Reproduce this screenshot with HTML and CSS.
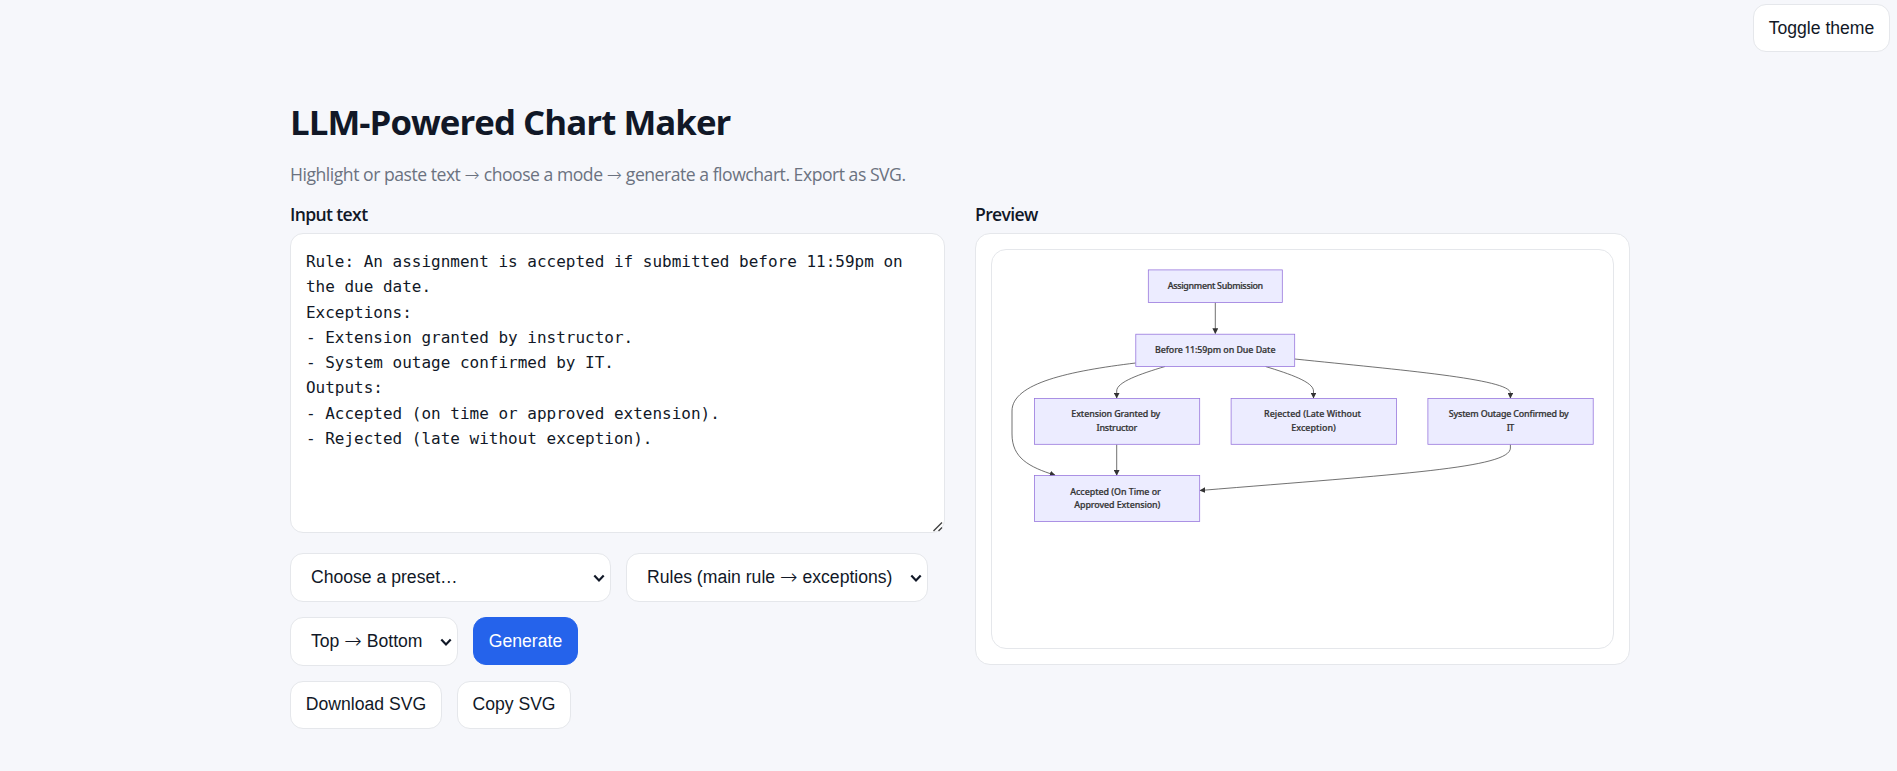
FILE: index.html
```html
<!DOCTYPE html>
<html lang="en">
<head>
<meta charset="utf-8">
<title>LLM-Powered Chart Maker</title>
<link rel="stylesheet" href="styles.css">
</head>
<body>
<div class="topbar"><button class="btn toggle">Toggle theme</button></div>
<main class="page">
  <h1 class="title"><span>LLM-Powered Chart Maker</span></h1>
  <p class="subtitle">Highlight or paste text <span class="arrow">→</span> choose a mode <span class="arrow">→</span> generate a flowchart. Export as SVG.</p>
  <div class="columns">
    <section class="column">
      <label class="label" for="input"><span>Input text</span></label>
      <textarea class="input" id="input" spellcheck="false">Rule: An assignment is accepted if submitted before 11:59pm on the due date.
Exceptions:
- Extension granted by instructor.
- System outage confirmed by IT.
Outputs:
- Accepted (on time or approved extension).
- Rejected (late without exception).</textarea>
      <div class="controls">
        <button class="select preset"><span>Choose a preset…</span><svg class="chevron" viewBox="0 0 12 9" width="12" height="9"><path d="M1.3 1.5L6 6.4L10.7 1.5"/></svg></button>
        <button class="select mode"><span>Rules (main rule <span class="arrow">→</span> exceptions)</span><svg class="chevron" viewBox="0 0 12 9" width="12" height="9"><path d="M1.3 1.5L6 6.4L10.7 1.5"/></svg></button>
        <button class="select direction"><span>Top <span class="arrow">→</span> Bottom</span><svg class="chevron" viewBox="0 0 12 9" width="12" height="9"><path d="M1.3 1.5L6 6.4L10.7 1.5"/></svg></button>
        <button class="btn primary">Generate</button>
      </div>
      <div class="exports">
        <button class="btn download">Download SVG</button>
        <button class="btn copy">Copy SVG</button>
      </div>
    </section>
    <section class="column">
      <div class="label"><span>Preview</span></div>
      <div class="card">
        <div class="canvas">
          <svg class="chart" viewBox="992 250 621 398" width="621" height="398">
            <defs>
              <marker id="arrow" viewBox="0 0 10 10" refX="9" refY="5" markerWidth="5.8" markerHeight="5.8" markerUnits="userSpaceOnUse" orient="auto"><path d="M0 0L10 5L0 10z" fill="#333"/></marker>
            </defs>
            <g class="edges">
              <path d="M1215.3 302.5V333.5"/>
              <path d="M1135.6 363C1070 371 1012 383 1012 411V434C1012 458 1029 467 1055 475.2"/>
              <path d="M1165 366.5C1140 374 1116.7 382 1116.7 391V398"/>
              <path d="M1265.5 366.5C1290 374 1313.5 382 1313.5 391V398"/>
              <path d="M1294.8 359C1400 370 1510.4 379 1510.4 393V398"/>
              <path d="M1116.7 444.5V475.2"/>
              <path d="M1510.4 444.5V448C1510.4 468 1400 474 1200 490.5"/>
            </g>
            <g class="nodes">
              <rect x="1148.3" y="269.9" width="134" height="32.5"/>
              <rect x="1135.8" y="334.2" width="158.9" height="32.2"/>
              <rect x="1034.4" y="398.4" width="165.3" height="45.9"/>
              <rect x="1231.1" y="398.4" width="165.3" height="45.9"/>
              <rect x="1427.9" y="398.4" width="165.3" height="45.9"/>
              <rect x="1034.4" y="475.6" width="165.3" height="45.9"/>
            </g>
            <g class="texts">
              <text x="1167.7" y="289" textLength="95.5">Assignment Submission</text>
              <text x="1155" y="353" textLength="120.5">Before 11:59pm on Due Date</text>
              <text x="1071.3" y="417" textLength="89">Extension Granted by</text>
              <text x="1096.5" y="431" textLength="40.8">Instructor</text>
              <text x="1264" y="417" textLength="97">Rejected (Late Without</text>
              <text x="1291.3" y="431" textLength="44.5">Exception)</text>
              <text x="1448.8" y="417" textLength="120">System Outage Confirmed by</text>
              <text x="1506.8" y="431" textLength="7.4">IT</text>
              <text x="1070.3" y="495" textLength="90.5">Accepted (On Time or</text>
              <text x="1074.3" y="508" textLength="86">Approved Extension)</text>
            </g>
          </svg>
        </div>
      </div>
    </section>
  </div>
</main>
</body>
</html>
```
FILE: styles.css
```css
* { box-sizing: border-box; }
body {
  margin: 0;
  height: 771px;
  overflow: hidden;
  background: #f6f7fb;
  color: #111827;
  font-family: "Open Sans", "Noto Sans", sans-serif;
  font-size: 17.6px;
}
.topbar { display: flex; justify-content: flex-end; padding: 4px 7px 0 0; height: 52px; }
.btn {
  height: 48px;
  padding: 0;
  border: 1px solid #e5e7eb;
  border-radius: 13px;
  background: #fff;
  color: #111827;
  font: 17.6px "Liberation Sans", Arial, sans-serif;
}
.toggle { width: 137px; }
.page { width: 1630px; padding: 45px 0 0 290px; }
.title { margin: 0; height: 50px; line-height: 50px; font-size: 34.8px; font-weight: 700; white-space: nowrap; letter-spacing: -0.95px; }
.subtitle { margin: 14px 0 0; height: 26px; line-height: 26px; color: #6b7280; white-space: nowrap; font-weight: 400; letter-spacing: -0.48px; }
.arrow { font-family: "DejaVu Sans", sans-serif; font-weight: 200; font-size: 21px; line-height: 0; letter-spacing: 0; vertical-align: -1px; }
.subtitle .arrow { font-size: 18px; vertical-align: 0; }
.columns { display: grid; grid-template-columns: 655px 655px; gap: 30px; margin-top: 14px; }
.label { display: block; height: 32px; line-height: 26px; font-weight: 600; letter-spacing: -0.65px; }
.input {
  display: block;
  width: 655px;
  height: 300px;
  padding: 15px;
  border: 1px solid #e5e7eb;
  border-radius: 13px;
  background: #fff;
  color: #111827;
  font: 15.99px/25.25px "DejaVu Sans Mono", monospace;
  resize: vertical;
}
.input::-webkit-resizer {
  background: url("data:image/svg+xml,%3Csvg xmlns='http://www.w3.org/2000/svg' width='15' height='15'%3E%3Cpath d='M4.5 14L13 5.5M9.5 14L13 10.5' stroke='%23444' stroke-width='1.4' fill='none'/%3E%3C/svg%3E") no-repeat;
}
.controls { display: flex; flex-wrap: wrap; gap: 15px; margin-top: 20px; }
.exports { display: flex; gap: 15px; margin-top: 15px; }
.exports .btn { padding-bottom: 2px; }
.select {
  display: flex;
  align-items: center;
  justify-content: space-between;
  height: 49px;
  padding: 0 5px 1px 20px;
  border: 1px solid #e5e7eb;
  border-radius: 13px;
  background: #fff;
  color: #111827;
  font: 17.6px "Liberation Sans", Arial, sans-serif;
  white-space: nowrap;
}
.chevron { flex: none; margin-top: 2px; fill: none; stroke: #111827; stroke-width: 2.2; }
.preset { width: 321px; }
.mode { width: 302px; }
.direction { width: 168px; }
.primary { width: 105px; background: #2563eb; border-color: #2563eb; color: #fff; }
.download { width: 152px; }
.copy { width: 114px; }
.card { height: 432px; padding: 15px; border: 1px solid #e5e7eb; border-radius: 15px; background: #fff; }
.canvas { height: 400px; border: 1px solid #e5e7eb; border-radius: 15px; overflow: hidden; }
.chart { display: block; }
.edges path { fill: none; stroke: #333; stroke-width: .7; marker-end: url(#arrow); }
.nodes rect { fill: #ececff; stroke: #9370db; stroke-width: .75; }
.texts text { font: 500 8.9px "Noto Sans", sans-serif; fill: #333; stroke: #333; stroke-width: .22; }
```
